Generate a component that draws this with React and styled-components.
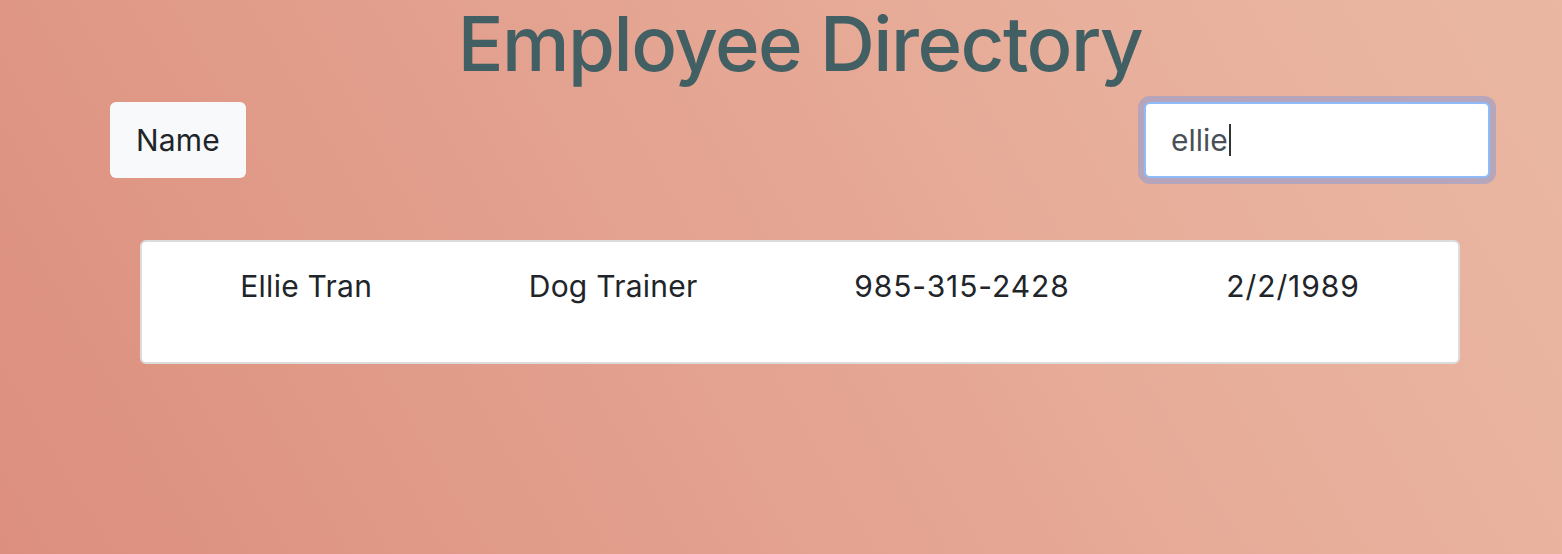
import React from "react";
import styled, { createGlobalStyle } from "styled-components";

const Global = createGlobalStyle`
  html, body { margin: 0; padding: 0; }
  body {
    min-height: 554px;
    font-family: Inter, "Noto Sans", "Liberation Sans", sans-serif;
    background: linear-gradient(60deg, #dc8f7e 0%, #e3a08e 40%, #e8b09c 75%, #e9b7a2 100%);
    background-attachment: fixed;
    color: #212529;
  }
`;

const Page = styled.div`
  min-height: 554px;
  box-sizing: border-box;
  padding: 0 72px 0 110px;
`;

const Title = styled.h1`
  margin: 0;
  height: 98px;
  font-size: 76px;
  font-weight: 500;
  line-height: 86px;
  text-align: center;
  color: #425f63;
  letter-spacing: -1.5px;
`;

const Toolbar = styled.div`
  display: flex;
  justify-content: space-between;
  align-items: center;
  margin-top: 4px;
`;

const SortButton = styled.button`
  height: 76px;
  padding: 0 26px;
  border: none;
  border-radius: 6px;
  background: #f8f9fa;
  color: #212529;
  font-family: inherit;
  font-size: 30px;
  letter-spacing: 0.2px;
  cursor: pointer;
`;

const Caret = styled.span`
  display: inline-block;
  width: 2px;
  height: 32px;
  background: #333;
  margin-left: 1px;
`;

const SearchBox = styled.div`
  box-sizing: border-box;
  width: 346px;
  height: 76px;
  padding: 0 25px;
  border: 2px solid #8fbcf8;
  border-radius: 6px;
  background: #fff;
  color: #495057;
  font-size: 30px;
  display: flex;
  align-items: center;
  box-shadow: 0 0 0 6px rgba(160, 160, 200, 0.7);
`;

const Card = styled.div`
  margin: 62px 30px 0 30px;
  box-sizing: border-box;
  height: 124px;
  background: #fff;
  border: 2px solid #dcdcdc;
  border-radius: 6px;
  padding: 23px 20px 0;
`;

const Row = styled.div`
  display: flex;
  justify-content: space-around;
  font-size: 30px;
  line-height: 42px;
  color: #212529;
`;

const Cell = styled.span`
  letter-spacing: ${(p) => (p.$numeric ? "0.9px" : "0.25px")};
`;

export default function App() {
  return (
    <>
      <Global />
      <Page>
        <Title>Employee Directory</Title>
        <Toolbar>
          <SortButton>Name</SortButton>
          <SearchBox>
            ellie<Caret />
          </SearchBox>
        </Toolbar>
        <Card>
          <Row>
            <Cell>Ellie Tran</Cell>
            <Cell>Dog Trainer</Cell>
            <Cell $numeric>985-315-2428</Cell>
            <Cell $numeric>2/2/1989</Cell>
          </Row>
        </Card>
      </Page>
    </>
  );
}
